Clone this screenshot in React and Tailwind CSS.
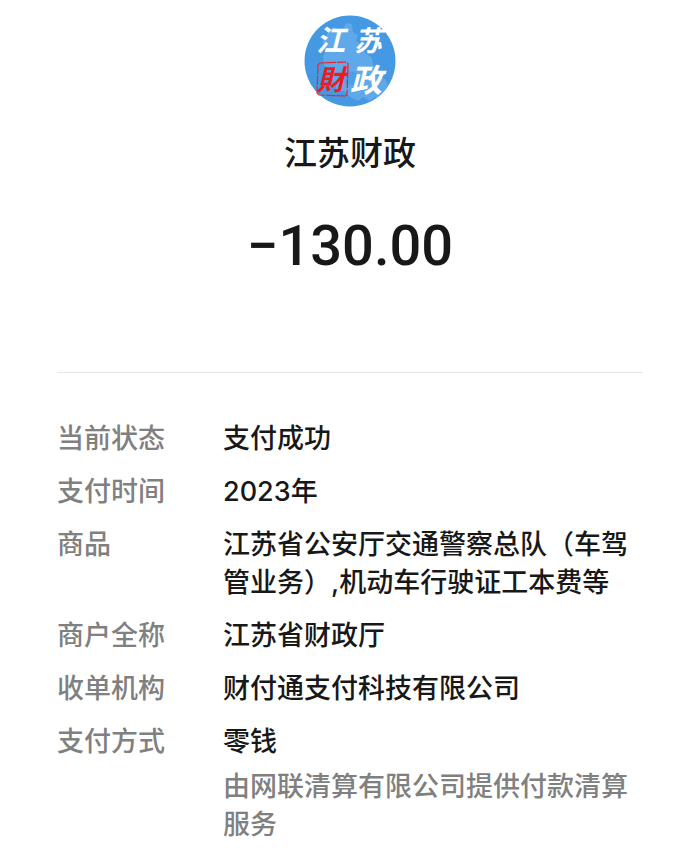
const rows = [
  { label: '当前状态', value: '支付成功' },
  { label: '支付时间', value: '2023年' },
  { label: '商品', value: '江苏省公安厅交通警察总队（车驾管业务）,机动车行驶证工本费等' },
  { label: '商户全称', value: '江苏省财政厅' },
  { label: '收单机构', value: '财付通支付科技有限公司' },
  { label: '支付方式', value: '零钱', note: '由网联清算有限公司提供付款清算服务' },
];

function Logo() {
  return (
    <svg
      className="size-[92px] font-['Noto_Sans_CJK_SC',sans-serif] font-bold italic"
      viewBox="0 0 92 92"
      role="img"
      aria-label="江苏财政"
    >
      <defs>
        <clipPath id="disc">
          <circle cx="46" cy="46" r="45.5" />
        </clipPath>
      </defs>
      <g clipPath="url(#disc)">
        <rect width="92" height="92" fill="#4599e3" />
        <path
          fill="#5fa9ea"
          d="M25 16l5-4 5 3 5-2 2-5 6 1 1 8 5 3-2 6 6 4 3 8 7 5 1 7 6 4-2 6 8 4 3 7 8 1-2 6-8 1-3 6-8-3-5 4-7-4-5 4-8-4-5-6-8-1-3-8-6-5 2-7-6-5-1-9 4-7-5-7z"
        />
        <path fill="#4599e3" d="M43 56l8 1 4 7-5 7-8-2-3-7z" opacity=".6" />
      </g>
      <g fill="#fff">
        <text x="12" y="36" fontSize="29">江</text>
        <text x="50" y="36" fontSize="28">苏</text>
        <text x="46" y="77" fontSize="32">政</text>
      </g>
      <path
        d="M16 48l27-1 1 2-1 31-2 1-26-1-2-2 1-28z"
        fill="none"
        stroke="#e5262c"
        strokeWidth="1.2"
        strokeDasharray="16 1 9 1.5"
      />
      <text x="13" y="75" fontSize="28" fill="#ee1b22">財</text>
    </svg>
  );
}

export default function App() {
  return (
    <main className="min-h-screen bg-white px-[57px] pt-[15px] pb-[14px] font-[Inter,'Noto_Sans_CJK_SC',sans-serif] text-[27px] leading-[38px] font-medium text-[#181818]">
      <header className="flex flex-col items-center border-b border-[#e6e6e6] pb-[91px]">
        <Logo />
        <h1 className="mt-[22px] text-[33px] leading-[48px] font-medium">江苏财政</h1>
        <p className="mt-[34px] font-[Roboto,sans-serif] text-[56px] leading-[70px] font-medium">−130.00</p>
      </header>
      <dl className="mt-[47px] flex flex-col gap-[15px]">
        {rows.map((row) => (
          <div key={row.label} className="flex">
            <dt className="w-[166px] shrink-0 text-[#808080]">{row.label}</dt>
            <dd className="min-w-0 flex-1">
              <p>{row.value}</p>
              {row.note && <p className="mt-[7px] text-[#808080]">{row.note}</p>}
            </dd>
          </div>
        ))}
      </dl>
    </main>
  );
}
